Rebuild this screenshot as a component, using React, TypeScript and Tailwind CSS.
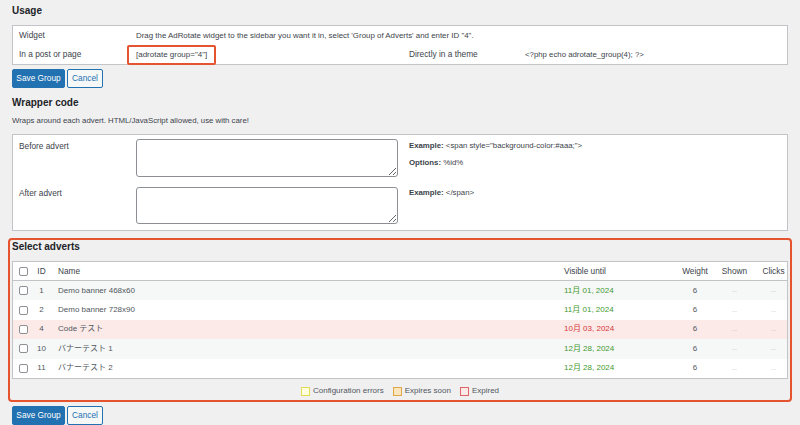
import React from "react";

const font = { fontFamily: '"Liberation Sans", Arial, "Noto Sans CJK JP", sans-serif' };

function Checkbox() {
  return <span className="block w-[9px] h-[9px] rounded-[2px] border border-[#8c8f94] bg-white" />;
}

function Buttons() {
  return (
    <div className="flex gap-[2px] h-[19px]">
      <button className="h-[19px] w-[53px] rounded-[2px] bg-[#2271b1] text-white text-[8.3px] flex items-center justify-center border border-[#2271b1]">
        Save Group
      </button>
      <button className="h-[19px] w-[36px] rounded-[2px] bg-[#f6f7f7] text-[#2271b1] text-[8.3px] flex items-center justify-center border border-[#2271b1]">
        Cancel
      </button>
    </div>
  );
}

const rows = [
  { id: "1", name: "Demo banner 468x60", date: "11月 01, 2024", bg: "bg-[#f6f7f7]", red: false },
  { id: "2", name: "Demo banner 728x90", date: "11月 01, 2024", bg: "bg-white", red: false },
  { id: "4", name: "Code テスト", date: "10月 03, 2024", bg: "bg-[#fbeae8]", red: true },
  { id: "10", name: "バナーテスト 1", date: "12月 28, 2024", bg: "bg-[#f6f7f7]", red: false },
  { id: "11", name: "バナーテスト 2", date: "12月 28, 2024", bg: "bg-white", red: false },
];

const gridCols = "grid grid-cols-[19px_19px_506px_118px_40px_39px_39px]";

export default function App() {
  return (
    <div style={font} className="w-[800px] h-[425px] overflow-hidden bg-[#f0f0f1] px-[12px] text-[#3c434a] text-[8.3px]">
      {/* Usage */}
      <div className="h-[20px] flex items-center text-[10px] font-bold text-[#1d2327]">Usage</div>
      <div className="mt-[5px] border border-[#c3c4c7] bg-white grid grid-cols-[123px_273px_116px_1fr]">
        <div className="h-[19px] flex items-center pl-[6px]">Widget</div>
        <div className="h-[19px] flex items-center col-span-3 text-[7.9px]">
          Drag the AdRotate widget to the sidebar you want it in, select 'Group of Adverts' and enter ID "4".
        </div>
        <div className="h-[19px] flex items-center pl-[6px]">In a post or page</div>
        <div className="h-[19px] flex items-center">
          <span className="ml-[-9px] h-[20px] flex items-center px-[7px] border-2 border-[#e5532f] rounded-[2px] mt-[1px] text-[8px]">
            [adrotate group="4"]
          </span>
        </div>
        <div className="h-[19px] flex items-center">Directly in a theme</div>
        <div className="h-[19px] flex items-center text-[7.8px]">&lt;?php echo adrotate_group(4); ?&gt;</div>
      </div>
      <div className="mt-[4px]">
        <Buttons />
      </div>

      {/* Wrapper code */}
      <div className="mt-[4px] h-[20px] flex items-center text-[10px] font-bold text-[#1d2327]">Wrapper code</div>
      <div className="h-[18px] flex items-center text-[7.8px]">Wraps around each advert. HTML/JavaScript allowed, use with care!</div>
      <div className="mt-[4px] border border-[#c3c4c7] bg-white grid grid-cols-[123px_262px_11px_1fr]">
        <div className="pl-[6px] pt-[6px] leading-[10px]">Before advert</div>
        <div className="pt-[4px] pb-[6px]">
          <textarea className="block w-[262px] h-[38px] border border-[#8c8f94] rounded-[3px] bg-white" />
        </div>
        <div />
        <div className="pt-[6px] leading-[10px] text-[7.8px]">
          <div>
            <span className="font-bold">Example:</span> &lt;span style="background-color:#aaa;"&gt;
          </div>
          <div className="mt-[7px]">
            <span className="font-bold">Options:</span> %id%
          </div>
        </div>
        <div className="pl-[6px] pt-[5px] leading-[10px]">After advert</div>
        <div className="pt-[4px] pb-[6px]">
          <textarea className="block w-[262px] h-[37px] border border-[#8c8f94] rounded-[3px] bg-white" />
        </div>
        <div />
        <div className="pt-[5px] leading-[10px] text-[7.8px]">
          <span className="font-bold">Example:</span> &lt;/span&gt;
        </div>
      </div>

      {/* Select adverts */}
      <div className="mt-[7px] mx-[-4px] border-2 border-[#e5532f] rounded-[4px] px-[2px]">
        <div className="h-[13px] flex items-center text-[10px] font-bold text-[#1d2327]">Select adverts</div>
        <div className="mt-[8px] border border-[#c3c4c7] bg-white">
          <div className={`${gridCols} h-[19px] items-center border-b border-[#c3c4c7] text-[#3c434a]`}>
            <div className="pl-[6px]"><Checkbox /></div>
            <div className="text-center">ID</div>
            <div className="pl-[7px]">Name</div>
            <div className="pl-[7px]">Visible until</div>
            <div className="text-center">Weight</div>
            <div className="text-center">Shown</div>
            <div className="text-center">Clicks</div>
          </div>
          {rows.map((r) => (
            <div key={r.id} className={`${gridCols} h-[19.4px] items-center ${r.bg} text-[8px] text-[#50575e]`}>
              <div className="pl-[6px]"><Checkbox /></div>
              <div className="text-center">{r.id}</div>
              <div className="pl-[7px]">{r.name}</div>
              <div className={`pl-[7px] ${r.red ? "text-[#d63638]" : "text-[#3f9a2e]"}`}>{r.date}</div>
              <div className="text-center">6</div>
              <div className="text-center text-[#a7aaad] text-[6px]">...</div>
              <div className="text-center text-[#a7aaad] text-[6px]">...</div>
            </div>
          ))}
        </div>
        <div className="h-[21px] pt-[4px] flex items-center justify-center gap-[9px] text-[8px] text-[#50575e]">
          <div className="flex items-center gap-[3px]">
            <span className="block w-[9px] h-[9px] border border-[#e6db55] bg-[#ffffe0]" />
            <span>Configuration errors</span>
          </div>
          <div className="flex items-center gap-[3px]">
            <span className="block w-[9px] h-[9px] border border-[#e0a64b] bg-[#fde6bd]" />
            <span>Expires soon</span>
          </div>
          <div className="flex items-center gap-[3px]">
            <span className="block w-[9px] h-[9px] border border-[#e06666] bg-[#fbeaea]" />
            <span>Expired</span>
          </div>
        </div>
      </div>
      <div className="mt-[4px]">
        <Buttons />
      </div>
    </div>
  );
}
